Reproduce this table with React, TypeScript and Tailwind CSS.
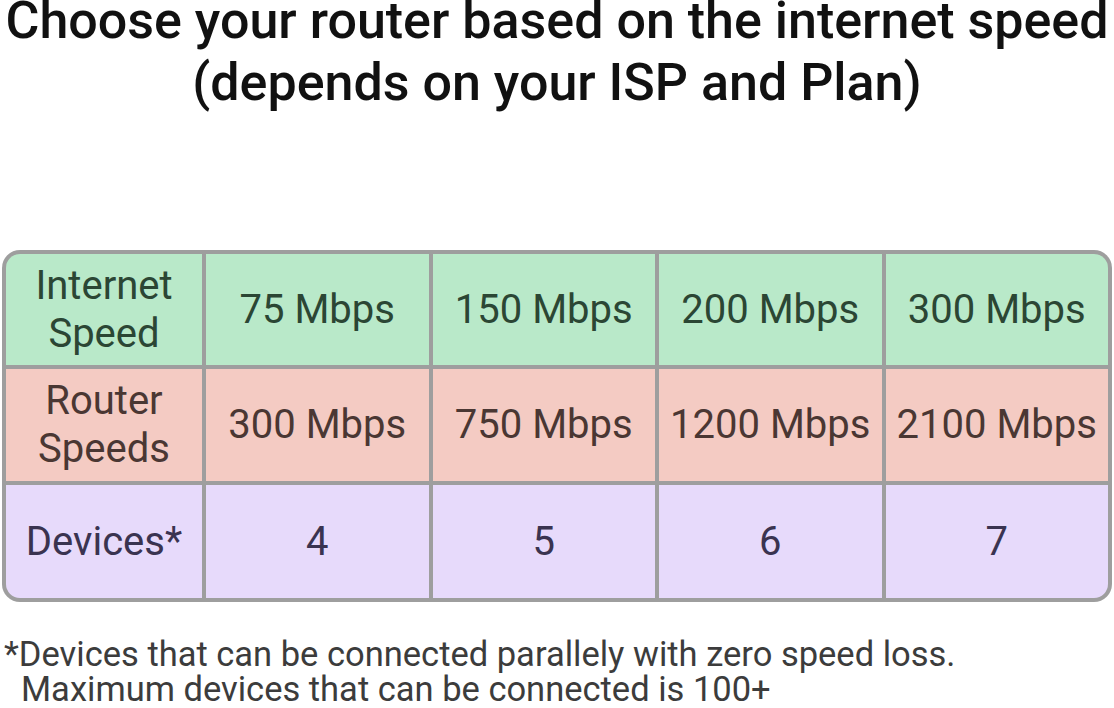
const rows = [
  {
    label: ["Internet", "Speed"],
    values: ["75 Mbps", "150 Mbps", "200 Mbps", "300 Mbps"],
    cell: "bg-[#b9e9c9] text-[#2b4634]",
    height: "h-[111px]",
  },
  {
    label: ["Router", "Speeds"],
    values: ["300 Mbps", "750 Mbps", "1200 Mbps", "2100 Mbps"],
    cell: "bg-[#f4cbc3] text-[#4a3733]",
    height: "h-[112px]",
  },
  {
    label: ["Devices*"],
    values: ["4", "5", "6", "7"],
    cell: "bg-[#e7dafb] text-[#3a3350]",
    height: "h-[113px]",
  },
];

export default function App() {
  return (
    <div
      className="w-[1114px] h-[708px] bg-white overflow-hidden"
      style={{ fontFamily: "Roboto, 'Noto Sans', sans-serif" }}
    >
      <h1 className="text-center text-[52px] font-medium text-[#111] whitespace-nowrap">
        <span className="block leading-[42px]">
          Choose your router based on the internet speed
        </span>
        <span className="block mt-[10px] leading-[62px]">
          (depends on your ISP and Plan)
        </span>
      </h1>

      <div className="mt-[136px] mx-[2px] w-[1110px] rounded-[18px] bg-[#9e9e9e] p-[4px] grid grid-cols-[196px_1fr_1fr_1fr_1fr] gap-[4px]">
        {rows.map((r, ri) => (
          <div key={ri} className="contents">
            <div
              className={`${r.cell} ${r.height} flex flex-col items-center justify-center text-[40px] leading-[48px] ${
                ri === 0 ? "rounded-tl-[14px]" : ""
              } ${ri === 2 ? "rounded-bl-[14px]" : ""}`}
            >
              {r.label.map((l) => (
                <span key={l}>{l}</span>
              ))}
            </div>
            {r.values.map((v, vi) => (
              <div
                key={vi}
                className={`${r.cell} ${r.height} flex items-center justify-center text-[40px] leading-[48px] whitespace-nowrap ${
                  ri === 0 && vi === 3 ? "rounded-tr-[14px]" : ""
                } ${ri === 2 && vi === 3 ? "rounded-br-[14px]" : ""}`}
              >
                {v}
              </div>
            ))}
          </div>
        ))}
      </div>

      <div className="mt-[35px] pl-[4px] text-[34.5px] leading-[35px] text-[#3c3c3c] whitespace-nowrap">
        <p>*Devices that can be connected parallely with zero speed loss.</p>
        <p className="pl-[17px]">Maximum devices that can be connected is 100+</p>
      </div>
    </div>
  );
}
